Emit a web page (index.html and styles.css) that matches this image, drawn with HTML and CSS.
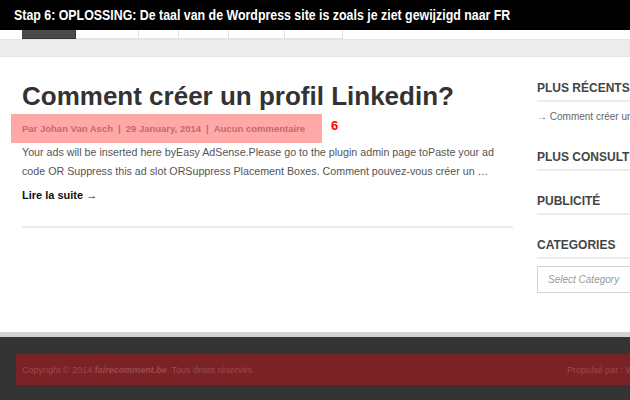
FILE: index.html
```html
<!DOCTYPE html>
<html>

<head>
    <meta charset="UTF-8">
    <meta name="viewport" content="width=device-width, initial-scale=1">
    <title>Stap 6</title>
    <link rel="stylesheet" href="styles.css">
</head>

<body>
    <!-- caption -->
    <div class="caption">
        <span class="caption-text">Stap 6: OPLOSSING: De taal van de Wordpress site is zoals je ziet gewijzigd naar FR</span>
    </div>

    <!-- menu -->
    <div class="nav">
        <div class="nav-item nav-active"></div>
        <div class="nav-item nav-w1"></div>
        <div class="nav-item nav-w2"></div>
        <div class="nav-item nav-w3"></div>
        <div class="nav-item nav-w4"></div>
        <div class="nav-item nav-w5"></div>
    </div>
    <div class="band"></div>

    <!-- content -->
    <div class="page">
        <div class="main">
            <h1 class="post-title">Comment créer un profil Linkedin?</h1>
            <div class="meta-row">
                <div class="meta">Par Johan Van Asch<span class="sep">|</span>29 January, 2014<span class="sep">|</span>Aucun commentaire</div>
                <span class="step">6</span>
            </div>
            <p class="excerpt">
                Your ads will be inserted here byEasy AdSense.Please go to the plugin admin page toPaste your ad<br>
                code OR Suppress this ad slot ORSuppress Placement Boxes. Comment pouvez-vous créer un …
            </p>
            <div class="more">Lire la suite →</div>
            <div class="divider"></div>
        </div>

        <!-- sidebar -->
        <div class="sidebar">
            <div class="widget">
                <h3 class="widget-title">Plus récents</h3>
                <div class="widget-link">→ Comment créer un profil Linkedin?</div>
            </div>
            <div class="widget">
                <h3 class="widget-title">Plus consultés</h3>
            </div>
            <div class="widget">
                <h3 class="widget-title">Publicité</h3>
            </div>
            <div class="widget">
                <h3 class="widget-title">Categories</h3>
                <div class="select">Select Category</div>
            </div>
        </div>
    </div>

    <!-- footer -->
    <div class="footer">
        <div class="footer-bar">
            <span>Copyright © 2014 <b><i>fairecomment.be</i></b>. Tous droits réservés.</span>
            <span class="powered">Propulsé par : WordPress</span>
        </div>
    </div>
</body>

</html>
```

FILE: styles.css
```css
body {
    margin: 0px;
    background-color: white;
    overflow: hidden;
    width: 630px;
    height: 400px;
}

* {
    box-sizing: border-box;
    font-family: 'Liberation Sans', Arial, sans-serif;
}

.caption {
    height: 30px;
    background-color: black;
    padding-left: 14px;
    white-space: nowrap;
    overflow: hidden;
}

.caption-text {
    display: inline-block;
    color: white;
    font-weight: bold;
    font-size: 15px;
    line-height: 30px;
    transform: scaleX(0.825);
    transform-origin: left center;
}

.nav {
    display: flex;
    height: 9px;
    padding-left: 22px;
    background-color: white;
}

.nav-item {
    height: 9px;
    border-right: 1px solid #e2e2e2;
    border-bottom: 1px solid #e2e2e2;
}

.nav-active {
    width: 54px;
    background-color: #4a4a4a;
    border-right: 1px solid #3a3a3a;
    border-bottom: 1px solid #333;
}

.nav-w1 { width: 63px; }
.nav-w2 { width: 40px; }
.nav-w3 { width: 50px; }
.nav-w4 { width: 56px; }
.nav-w5 { width: 58px; }

.band {
    height: 18px;
    background-color: #ececec;
    border-top: 1px solid #e4e4e4;
    border-bottom: 1px solid #e6e6e6;
}

.page {
    display: flex;
    gap: 24px;
    height: 275px;
    padding-left: 22px;
}

.main {
    width: 491px;
    flex-shrink: 0;
}

.post-title {
    margin: 22px 0 0 0;
    font-size: 26px;
    line-height: 34px;
    color: #333;
    font-weight: bold;
}

.meta-row {
    display: flex;
    align-items: center;
    margin-left: -11px;
    margin-top: 1px;
}

.meta {
    width: 311px;
    height: 29px;
    padding-left: 11px;
    line-height: 29px;
    background-color: #ffa8a8;
    color: #c46a6a;
    font-size: 9.5px;
    font-weight: bold;
    white-space: nowrap;
}

.sep {
    padding: 0 5px;
}

.step {
    margin-left: 9px;
    margin-top: -6px;
    color: #f00;
    font-weight: bold;
    font-size: 13px;
}

.excerpt {
    margin: 0 0 0 0;
    font-size: 10.7px;
    line-height: 19px;
    color: #555;
    white-space: nowrap;
}

.more {
    margin-top: 8px;
    font-size: 11px;
    font-weight: bold;
    color: #111;
}

.divider {
    margin-top: 25px;
    height: 2px;
    background-color: #ececec;
}

.sidebar {
    width: 200px;
    flex-shrink: 0;
    padding-top: 23px;
}

.widget {
    margin-bottom: 22px;
}

.widget-title {
    margin: 0;
    font-size: 12px;
    line-height: 16px;
    font-weight: bold;
    text-transform: uppercase;
    color: #444;
    padding-bottom: 4px;
    border-bottom: 2px solid #ececec;
}

.widget-link {
    margin-top: 9px;
    font-size: 10px;
    line-height: 12px;
    color: #666;
    white-space: nowrap;
    padding-bottom: 4px;
}

.select {
    margin-top: 7px;
    height: 27px;
    border: 1px solid #d4d4d4;
    padding-left: 10px;
    line-height: 25px;
    font-size: 10px;
    font-style: italic;
    color: #999;
}

.footer {
    height: 68px;
    background-color: #343434;
    border-top: 5px solid #d2d2d2;
    padding-top: 17px;
    padding-left: 16px;
}

.footer-bar {
    display: flex;
    width: 660px;
    height: 31px;
    align-items: center;
    padding-left: 6px;
    padding-right: 6px;
    background-color: #7a2226;
    color: #9c4a4c;
    font-size: 9px;
    white-space: nowrap;
}

.powered {
    margin-left: auto;
}
```
